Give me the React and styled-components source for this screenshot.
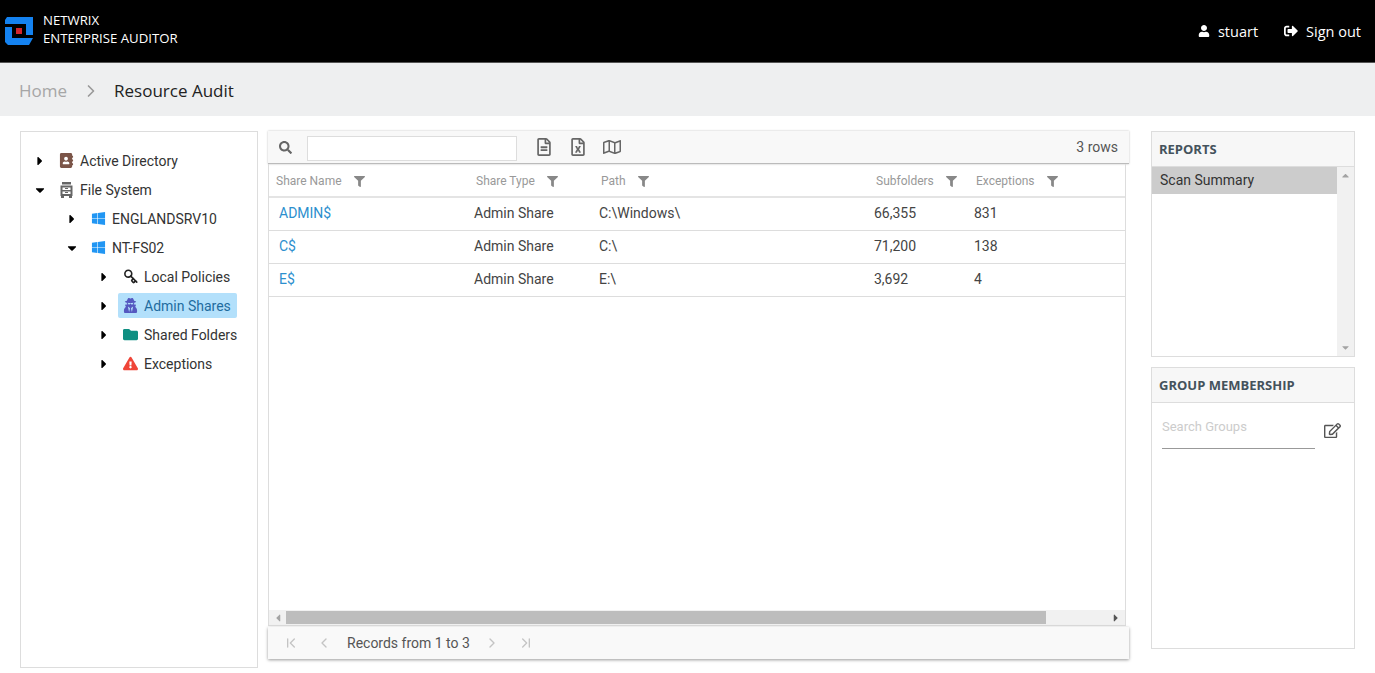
import styled, { createGlobalStyle } from "styled-components";
import {
  FaAddressBook,
  FaCaretDown,
  FaCaretRight,
  FaCaretUp,
  FaCaretLeft,
  FaExclamationTriangle,
  FaFilter,
  FaFolder,
  FaRegEdit,
  FaRegFileAlt,
  FaRegFileExcel,
  FaRegMap,
  FaSearch,
  FaSignOutAlt,
  FaUser,
  FaUserSecret,
  FaWindows,
} from "react-icons/fa";
import { ChevronFirst, ChevronLast, ChevronLeft, ChevronRight, Key } from "lucide-react";

const GlobalStyle = createGlobalStyle`
  html, body {
    margin: 0;
    height: 100%;
    overflow: hidden;
    background: #fff;
  }
  body {
    font-family: Roboto, "Liberation Sans", sans-serif;
    font-size: 14px;
    color: #333;
  }
  * {
    box-sizing: border-box;
  }
`;

const Page = styled.div`
  height: 673px;
  display: flex;
  flex-direction: column;
`;

const Header = styled.header`
  height: 63px;
  background: #000;
  color: #fff;
  display: flex;
  align-items: center;
  justify-content: space-between;
  padding: 0 14px 0 5px;
  border-bottom: 1px solid #555;
  font-family: "Open Sans", sans-serif;
`;

const Brand = styled.div`
  display: flex;
  align-items: center;
  gap: 10px;
`;

const BrandName = styled.div`
  font-size: 13.2px;
  font-weight: 500;
  line-height: 18px;
  margin-bottom: 4px;
`;

const UserNav = styled.nav`
  display: flex;
  align-items: center;
  gap: 26px;
  font-size: 14.5px;
`;

const NavItem = styled.span`
  display: flex;
  align-items: center;
  gap: ${(p) => p.$gap}px;
`;

const Breadcrumb = styled.div`
  height: 53px;
  background: #eeeff0;
  display: flex;
  align-items: center;
  padding: 2px 0 0 19px;
  font-family: "Open Sans", sans-serif;
  font-size: 17px;
`;

const Crumb = styled.span`
  color: ${(p) => (p.$muted ? "#a6a6a6" : "#222")};
`;

const CrumbSep = styled(ChevronRight)`
  color: #999;
  margin: 0 13px 0 14px;
`;

const Main = styled.main`
  flex: 1;
  display: flex;
  align-items: flex-start;
  padding: 15px 20px 0;
`;

const TreePanel = styled.aside`
  width: 238px;
  height: 537px;
  flex: none;
  border: 1px solid #ddd;
  padding: 14px 0 0;
`;

const TreeList = styled.ul`
  list-style: none;
  margin: 0;
  padding: 0;
`;

const TreeRow = styled.li`
  height: 29px;
  display: flex;
  align-items: center;
  padding-left: ${(p) => 13 + p.$level * 32}px;
  color: #333;
`;

const Caret = styled.span`
  width: 12px;
  display: flex;
  justify-content: center;
  color: #000;
  font-size: 14px;
  margin-right: 8px;
`;

const TreeLabel = styled.span`
  height: 25px;
  display: flex;
  align-items: center;
  gap: 6px;
  padding: 0 6px 0 5px;
  border-radius: 2px;
  background: ${(p) => (p.$selected ? "#b3e0fb" : "transparent")};
  color: ${(p) => (p.$selected ? "#1f6c9f" : "inherit")};
`;

const TreeIcon = styled.span`
  width: 15px;
  display: flex;
  justify-content: center;
  font-size: 15px;
  color: ${(p) => p.$color};
`;

const KeyIcon = styled(Key)`
  transform: rotate(90deg);
`;

const GridColumn = styled.section`
  width: 861px;
  flex: none;
  margin-left: 10px;
  height: 528px;
  display: flex;
  flex-direction: column;
`;

const Toolbar = styled.div`
  height: 33px;
  flex: none;
  background: #f8f8f8;
  border-bottom: 1px solid #bbb;
  box-shadow: 0 0 2px rgba(0, 0, 0, 0.25);
  display: flex;
  align-items: center;
  padding: 0 11px;
`;

const SearchBox = styled.input`
  width: 210px;
  height: 25px;
  margin: 2px 0 0 15px;
  background: #fff;
  border: 1px solid #ddd;
  outline: none;
`;

const ToolIcons = styled.div`
  display: flex;
  align-items: center;
  gap: 16px;
  margin-left: 18px;
  color: #666;
  font-size: 18px;
`;

const RowCount = styled.span`
  margin-left: auto;
  font-size: 14px;
  color: #555;
`;

const TableFrame = styled.div`
  width: 858px;
  flex: 1;
  border-left: 1px solid #ddd;
  border-right: 1px solid #ddd;
  border-bottom: 1px solid #ddd;
  display: flex;
  flex-direction: column;
  min-height: 0;
`;

const GridRow = styled.div`
  display: grid;
  grid-template-columns: 200px 125px 275px 100px 1fr;
  align-items: center;
  flex: none;
`;

const HeadRow = styled(GridRow)`
  height: 34px;
  padding-top: 2px;
  border-bottom: 2px solid #e4e4e4;
`;

const BodyRow = styled(GridRow)`
  height: 33px;
  padding-bottom: 2px;
  border-bottom: 1px solid #ddd;
`;

const HeadCell = styled.div`
  display: flex;
  align-items: center;
  gap: 12.5px;
  padding-left: 7px;
  font-size: 12px;
  color: #999;
  svg {
    font-size: 11px;
    color: #888;
  }
`;

const Cell = styled.div`
  padding-left: 5px;
  color: #444;
`;

const LinkCell = styled(Cell)`
  padding-left: 10px;
  color: #2d8fce;
`;

const TableBody = styled.div`
  flex: 1;
`;

const HScroll = styled.div`
  height: 15px;
  flex: none;
  background: #f1f1f1;
  display: flex;
  align-items: center;
  color: #555;
  font-size: 12px;
  padding: 0 3px;
`;

const HThumb = styled.div`
  width: 760px;
  height: 13px;
  background: #bdbdbd;
  margin: 0 auto 0 2px;
`;

const Pager = styled.div`
  height: 32px;
  flex: none;
  margin-top: 1px;
  background: #f9f9f9;
  box-shadow: 0 1px 3px rgba(0, 0, 0, 0.4);
  display: flex;
  align-items: center;
  padding-left: 15px;
  color: #c4c4c4;
`;

const PagerButton = styled.span`
  display: flex;
  margin-right: ${(p) => p.$gap}px;
`;

const PagerText = styled.span`
  color: #555;
  margin: 0 14px 0 1px;
`;

const Side = styled.aside`
  width: 204px;
  flex: none;
  margin-left: 22px;
  display: flex;
  flex-direction: column;
  gap: 10px;
`;

const SidePanel = styled.div`
  height: ${(p) => p.$height}px;
  border: 1px solid #ddd;
  display: flex;
  flex-direction: column;
`;

const SideTitle = styled.h3`
  height: 35px;
  flex: none;
  margin: 0;
  padding: 0 0 0 7px;
  background: #f7f7f7;
  border-bottom: 1px solid #ddd;
  display: flex;
  align-items: center;
  font-family: "Open Sans", sans-serif;
  font-size: 13px;
  font-weight: 700;
  color: #44525c;
`;

const ReportBody = styled.div`
  flex: 1;
  display: flex;
  min-height: 0;
`;

const ReportList = styled.div`
  flex: 1;
`;

const ReportItem = styled.div`
  height: 27px;
  background: #ccc;
  display: flex;
  align-items: center;
  padding: 0 0 2px 8px;
  color: #333;
`;

const VScroll = styled.div`
  width: 17px;
  flex: none;
  background: #f1f1f1;
  color: #a3a3a3;
  font-size: 11px;
  display: flex;
  flex-direction: column;
  justify-content: space-between;
  align-items: center;
  padding: 3px 0;
`;

const GroupSearch = styled.div`
  display: flex;
  align-items: flex-start;
  padding: 13px 13px 0 10px;
  color: #555;
  font-size: 17px;
`;

const GroupInput = styled.div`
  width: 153px;
  height: 33px;
  margin-right: 9px;
  border-bottom: 1px solid #999;
  font-size: 13px;
  color: #ccc;
  padding-top: 3px;
`;

const EditIcon = styled(FaRegEdit)`
  margin-top: 6px;
`;

const rows = [
  ["ADMIN$", "Admin Share", "C:\\Windows\\", "66,355", "831"],
  ["C$", "Admin Share", "C:\\", "71,200", "138"],
  ["E$", "Admin Share", "E:\\", "3,692", "4"],
];

const columns = ["Share Name", "Share Type", "Path", "Subfolders", "Exceptions"];

const Logo = () => (
  <svg width="28" height="28" viewBox="0 0 28 28">
    <path d="M2 0H28V18H21V7H0V3Z" fill="#1482f0" />
    <path d="M0 10H7V21H28L24 28H3L0 25Z" fill="#1482f0" />
    <rect x="11" y="11" width="6" height="6" fill="#d4252c" />
  </svg>
);

const CabinetIcon = () => (
  <svg width="15" height="16" viewBox="0 0 15 16">
    <path d="M3 0H12V2.5H3Z" fill="#666" />
    <path d="M1.5 3.5H13.5V14H1.5Z" fill="#666" />
    <path d="M3.5 5.5H11.5V8H3.5ZM3.5 9.5H11.5V12H3.5Z" fill="#fff" />
    <path d="M6 6.5H9M6 10.5H9" stroke="#666" strokeWidth="1" />
    <path d="M2 14H5V16H2ZM10 14H13V16H10Z" fill="#666" />
  </svg>
);

const tree = [
  { level: 0, open: false, label: "Active Directory", icon: <FaAddressBook />, color: "#7b5548" },
  { level: 0, open: true, label: "File System", icon: <CabinetIcon />, color: "#666" },
  { level: 1, open: false, label: "ENGLANDSRV10", icon: <FaWindows />, color: "#2196f3" },
  { level: 1, open: true, label: "NT-FS02", icon: <FaWindows />, color: "#2196f3" },
  { level: 2, open: false, label: "Local Policies", icon: <KeyIcon size={15} strokeWidth={2.6} />, color: "#222" },
  { level: 2, open: false, label: "Admin Shares", icon: <FaUserSecret />, color: "#5558c0", selected: true },
  { level: 2, open: false, label: "Shared Folders", icon: <FaFolder />, color: "#0f8f82" },
  { level: 2, open: false, label: "Exceptions", icon: <FaExclamationTriangle />, color: "#ef4538" },
];

export default function App() {
  return (
    <Page>
      <GlobalStyle />
      <Header>
        <Brand>
          <Logo />
          <BrandName>
            NETWRIX
            <br />
            ENTERPRISE AUDITOR
          </BrandName>
        </Brand>
        <UserNav>
          <NavItem $gap={8}>
            <FaUser size={12} />
            stuart
          </NavItem>
          <NavItem $gap={8}>
            <FaSignOutAlt size={14} />
            Sign out
          </NavItem>
        </UserNav>
      </Header>
      <Breadcrumb>
        <Crumb $muted>Home</Crumb>
        <CrumbSep size={20} />
        <Crumb>Resource Audit</Crumb>
      </Breadcrumb>
      <Main>
        <TreePanel>
          <TreeList>
            {tree.map((node) => (
              <TreeRow key={node.label} $level={node.level}>
                <Caret>{node.open ? <FaCaretDown /> : <FaCaretRight />}</Caret>
                <TreeLabel $selected={node.selected}>
                  <TreeIcon $color={node.color}>{node.icon}</TreeIcon>
                  {node.label}
                </TreeLabel>
              </TreeRow>
            ))}
          </TreeList>
        </TreePanel>
        <GridColumn>
          <Toolbar>
            <FaSearch color="#666" size={13} />
            <SearchBox />
            <ToolIcons>
              <FaRegFileAlt />
              <FaRegFileExcel />
              <FaRegMap />
            </ToolIcons>
            <RowCount>3 rows</RowCount>
          </Toolbar>
          <TableFrame>
            <HeadRow>
              {columns.map((c) => (
                <HeadCell key={c}>
                  {c}
                  <FaFilter />
                </HeadCell>
              ))}
            </HeadRow>
            <TableBody>
              {rows.map((r) => (
                <BodyRow key={r[0]}>
                  <LinkCell>{r[0]}</LinkCell>
                  <Cell>{r[1]}</Cell>
                  <Cell>{r[2]}</Cell>
                  <Cell>{r[3]}</Cell>
                  <Cell>{r[4]}</Cell>
                </BodyRow>
              ))}
            </TableBody>
            <HScroll>
              <FaCaretLeft color="#a3a3a3" />
              <HThumb />
              <FaCaretRight />
            </HScroll>
          </TableFrame>
          <Pager>
            <PagerButton $gap={17}>
              <ChevronFirst size={16} />
            </PagerButton>
            <PagerButton $gap={14}>
              <ChevronLeft size={16} />
            </PagerButton>
            <PagerText>Records from 1 to 3</PagerText>
            <PagerButton $gap={18}>
              <ChevronRight size={16} />
            </PagerButton>
            <PagerButton $gap={0}>
              <ChevronLast size={16} />
            </PagerButton>
          </Pager>
        </GridColumn>
        <Side>
          <SidePanel $height={226}>
            <SideTitle>REPORTS</SideTitle>
            <ReportBody>
              <ReportList>
                <ReportItem>Scan Summary</ReportItem>
              </ReportList>
              <VScroll>
                <FaCaretUp />
                <FaCaretDown />
              </VScroll>
            </ReportBody>
          </SidePanel>
          <SidePanel $height={282}>
            <SideTitle>GROUP MEMBERSHIP</SideTitle>
            <GroupSearch>
              <GroupInput>Search Groups</GroupInput>
              <EditIcon />
            </GroupSearch>
          </SidePanel>
        </Side>
      </Main>
    </Page>
  );
}
